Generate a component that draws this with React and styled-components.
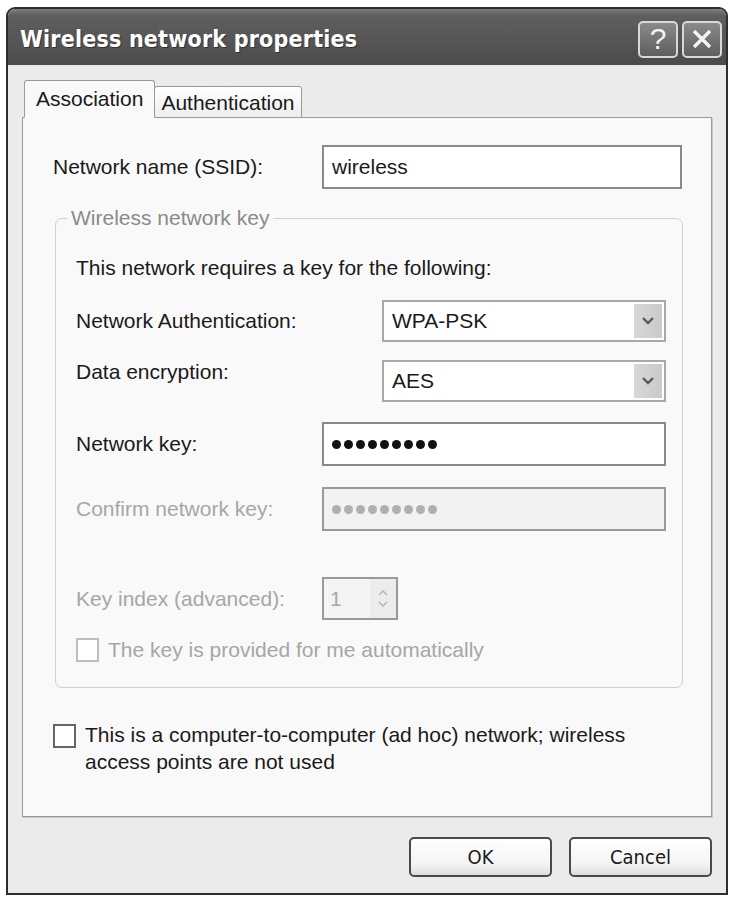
import React from "react";
import styled, { createGlobalStyle } from "styled-components";

const GlobalStyle = createGlobalStyle`
    html, body {
        margin: 0;
        padding: 0;
        background: #ffffff;
    }
    body {
        font-family: "Liberation Sans", Arial, sans-serif;
        color: #1a1a1a;
    }
`;

const Window = styled.div`
    box-sizing: border-box;
    width: 722px;
    height: 888px;
    margin: 7px 0 0 6px;
    border: 2px solid #2e2e2e;
    border-radius: 9px 9px 0 0;
    background: #ebebeb;
    display: flex;
    flex-direction: column;
    overflow: hidden;
`;

const TitleBar = styled.div`
    height: 56px;
    flex-shrink: 0;
    display: flex;
    align-items: center;
    justify-content: space-between;
    padding: 0 4px 0 12px;
    background: linear-gradient(#7c7c7c 0%, #5e5e5e 12%, #555555 60%, #4a4a4a 100%);
`;

const Title = styled.span`
    font-family: "DejaVu Sans Condensed", "DejaVu Sans", sans-serif;
    font-weight: bold;
    font-size: 23px;
    color: #ffffff;
    letter-spacing: 0.2px;
    text-shadow: 1px 1px 0 #333;
    margin-top: 4px;
`;

const Controls = styled.div`
    display: flex;
    gap: 4px;
    margin-top: 4px;
`;

const TitleButton = styled.div`
    box-sizing: border-box;
    width: 40px;
    height: 37px;
    border: 2px solid #d8d8d8;
    border-radius: 5px;
    background: linear-gradient(#8a8a8a, #5e5e5e);
    display: flex;
    align-items: center;
    justify-content: center;
    color: #f4f4f4;
    font-size: 30px;
    font-family: "Liberation Sans", Arial, sans-serif;
`;

const Body = styled.div`
    flex: 1;
    display: flex;
    flex-direction: column;
    padding: 15px 14px 16px 14px;
`;

const TabStrip = styled.div`
    display: flex;
    align-items: flex-end;
    padding-left: 2px;
    position: relative;
    z-index: 1;
    margin-bottom: -1px;
`;

const Tab = styled.div`
    box-sizing: border-box;
    height: ${(p) => (p.$active ? "38px" : "32px")};
    padding: 0 ${(p) => (p.$active ? "11px" : "6px")};
    display: flex;
    align-items: center;
    font-size: 21px;
    border: 1px solid #9a9a9a;
    border-bottom: ${(p) => (p.$active ? "1px solid #f9f9f9" : "1px solid #9a9a9a")};
    border-radius: 3px 3px 0 0;
    background: ${(p) => (p.$active ? "#f9f9f9" : "linear-gradient(#ffffff, #ededed)")};
    margin-left: ${(p) => (p.$active ? "0" : "-1px")};
    padding-top: ${(p) => (p.$active ? "0" : "2px")};
`;

const Panel = styled.div`
    flex: 1;
    border: 1px solid #9a9a9a;
    background: #f9f9f9;
    box-shadow: 1px 1px 0 #c8c8c8;
    padding: 27px 28px 0 30px;
    display: flex;
    flex-direction: column;
`;

const Row = styled.div`
    display: flex;
    align-items: ${(p) => p.$align || "center"};
    margin-top: ${(p) => p.$mt || "0"};
`;

const Label = styled.span`
    font-size: 21px;
    line-height: 24px;
    width: ${(p) => p.$w || "auto"};
    flex-shrink: 0;
    color: ${(p) => (p.$disabled ? "#a6a6a6" : "#1a1a1a")};
`;

const TextBox = styled.div`
    box-sizing: border-box;
    width: ${(p) => p.$w};
    height: 44px;
    border: 2px solid ${(p) => (p.$disabled ? "#9a9a9a" : "#8a8a8a")};
    background: ${(p) => (p.$disabled ? "#f2f2f2" : "#ffffff")};
    display: flex;
    align-items: center;
    gap: 3px;
    padding-left: 8px;
    font-size: 21px;
    color: #1a1a1a;
`;

const Dot = styled.span`
    width: 9px;
    height: 9px;
    border-radius: 50%;
    background: ${(p) => (p.$disabled ? "#b0b0b0" : "#111111")};
`;

const Group = styled.div`
    margin: 29px 0 0 2px;
    width: 628px;
    height: 470px;
    box-sizing: border-box;
    border: 1px solid #cfcfcf;
    border-radius: 7px;
    position: relative;
    padding: 37px 0 0 20px;
    display: flex;
    flex-direction: column;
`;

const Legend = styled.span`
    position: absolute;
    top: -13px;
    left: 11px;
    background: #f9f9f9;
    padding: 0 4px;
    font-size: 21px;
    line-height: 24px;
    color: #8a8a8a;
`;

const Select = styled.div`
    box-sizing: border-box;
    width: 284px;
    height: 42px;
    border: 2px solid #a8a8a8;
    background: #ffffff;
    display: flex;
    align-items: center;
    justify-content: space-between;
    padding: 2px 2px 2px 8px;
    font-size: 21px;
`;

const SelectArrow = styled.div`
    width: 28px;
    height: 100%;
    background: linear-gradient(90deg, #d8d8d8, #c9c9c9);
    display: flex;
    align-items: center;
    justify-content: center;
`;

const Spinner = styled.div`
    box-sizing: border-box;
    width: 76px;
    height: 43px;
    border: 2px solid #9a9a9a;
    background: #f4f4f4;
    display: flex;
    align-items: center;
    justify-content: space-between;
    padding-left: 6px;
    font-size: 21px;
    color: #a8a8a8;
`;

const SpinArrows = styled.div`
    width: 26px;
    height: 100%;
    background: #ececec;
    display: flex;
    flex-direction: column;
    align-items: center;
    justify-content: center;
    gap: 5px;
`;

const CheckRow = styled.label`
    display: flex;
    align-items: flex-start;
    gap: 9px;
    font-size: 21px;
    line-height: ${(p) => p.$lh || "24px"};
    margin-top: ${(p) => p.$mt || "0"};
    color: ${(p) => (p.$disabled ? "#a6a6a6" : "#1a1a1a")};
`;

const CheckBox = styled.span`
    box-sizing: border-box;
    width: 23px;
    height: 24px;
    flex-shrink: 0;
    margin-top: ${(p) => p.$mt || "0"};
    border: 2px solid ${(p) => (p.$disabled ? "#bdbdbd" : "#666")};
    background: #ffffff;
`;

const Footer = styled.div`
    display: flex;
    justify-content: flex-end;
    gap: 17px;
    padding-top: 20px;
`;

const Button = styled.div`
    box-sizing: border-box;
    width: 143px;
    height: 40px;
    border: 2px solid #4a4a4a;
    border-radius: 5px;
    background: linear-gradient(#ffffff 0%, #f4f4f4 70%, #dcdcdc 100%);
    display: flex;
    align-items: center;
    justify-content: center;
    font-family: "DejaVu Sans Condensed", "DejaVu Sans", sans-serif;
    font-size: 20px;
    color: #1a1a1a;
`;

const Chevron = () => (
    <svg width="14" height="10" viewBox="0 0 14 10">
        <path d="M2 2 L7 7 L12 2" fill="none" stroke="#5a5a5a" strokeWidth="2.4" />
    </svg>
);

const SmallArrow = ({ up }) => (
    <svg width="10" height="6" viewBox="0 0 10 6">
        <path
            d={up ? "M1 5 L5 1 L9 5" : "M1 1 L5 5 L9 1"}
            fill="none"
            stroke="#b8b8b8"
            strokeWidth="1.6"
        />
    </svg>
);

const PasswordDots = ({ count, disabled }) =>
    Array.from({ length: count }, (_, i) => <Dot key={i} $disabled={disabled} />);

const App = () => {
    return (
        <>
            <GlobalStyle />
            <Window>
                <TitleBar>
                    <Title>Wireless network properties</Title>
                    <Controls>
                        <TitleButton>?</TitleButton>
                        <TitleButton>
                            <svg width="22" height="22" viewBox="0 0 22 22">
                                <path d="M3 3 L19 19 M19 3 L3 19" stroke="#f4f4f4" strokeWidth="3.4" />
                            </svg>
                        </TitleButton>
                    </Controls>
                </TitleBar>
                <Body>
                    <TabStrip>
                        <Tab $active>Association</Tab>
                        <Tab>Authentication</Tab>
                    </TabStrip>
                    <Panel>
                        <Row>
                            <Label $w="269px">Network name (SSID):</Label>
                            <TextBox $w="360px">wireless</TextBox>
                        </Row>
                        <Group>
                            <Legend>Wireless network key</Legend>
                            <Label>This network requires a key for the following:</Label>
                            <Row $mt="20px">
                                <Label $w="306px">Network Authentication:</Label>
                                <Select>
                                    WPA-PSK
                                    <SelectArrow>
                                        <Chevron />
                                    </SelectArrow>
                                </Select>
                            </Row>
                            <Row $align="flex-start" $mt="18px">
                                <Label $w="306px">Data encryption:</Label>
                                <Select>
                                    AES
                                    <SelectArrow>
                                        <Chevron />
                                    </SelectArrow>
                                </Select>
                            </Row>
                            <Row $mt="20px">
                                <Label $w="246px">Network key:</Label>
                                <TextBox $w="344px">
                                    <PasswordDots count={9} />
                                </TextBox>
                            </Row>
                            <Row $mt="21px">
                                <Label $w="246px" $disabled>Confirm network key:</Label>
                                <TextBox $w="344px" $disabled>
                                    <PasswordDots count={9} disabled />
                                </TextBox>
                            </Row>
                            <Row $mt="46px">
                                <Label $w="246px" $disabled>Key index (advanced):</Label>
                                <Spinner>
                                    1
                                    <SpinArrows>
                                        <SmallArrow up />
                                        <SmallArrow />
                                    </SpinArrows>
                                </Spinner>
                            </Row>
                            <CheckRow $disabled $mt="18px">
                                <CheckBox $disabled />
                                The key is provided for me automatically
                            </CheckRow>
                        </Group>
                        <CheckRow $mt="33px" $lh="27px">
                            <CheckBox $mt="3px" />
                            <span>
                                This is a computer-to-computer (ad hoc) network; wireless
                                <br />
                                access points are not used
                            </span>
                        </CheckRow>
                    </Panel>
                    <Footer>
                        <Button>OK</Button>
                        <Button>Cancel</Button>
                    </Footer>
                </Body>
            </Window>
        </>
    );
};

export default App;
